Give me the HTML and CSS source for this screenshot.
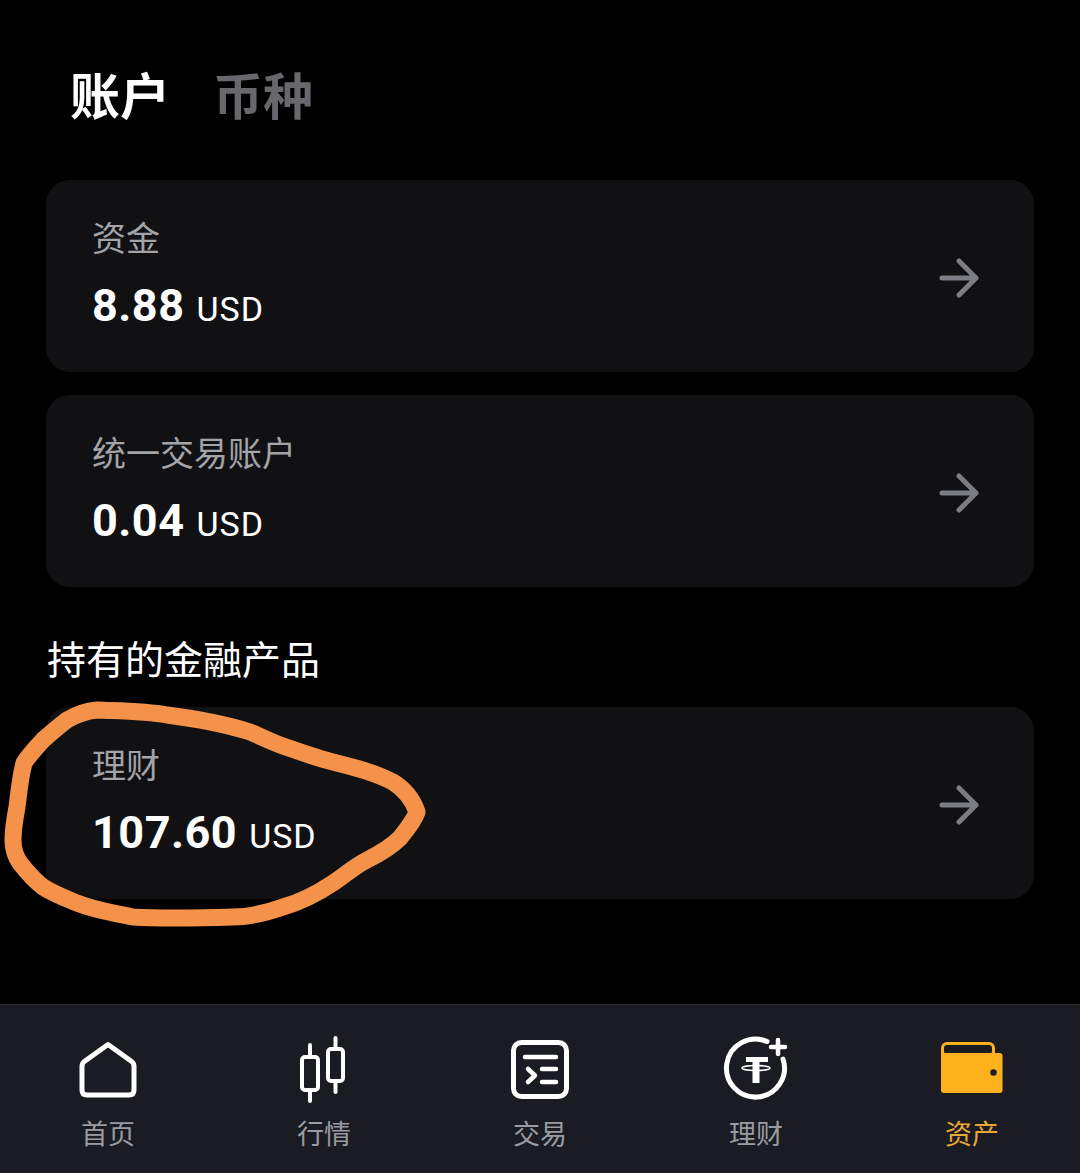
FILE: index.html
```html
<!DOCTYPE html>
<html lang="zh-CN">
<head>
    <meta charset="UTF-8">
    <title>资产</title>
    <link rel="stylesheet" href="styles.css">
</head>
<body>
    <div class="page">
        <main class="content">
            <div class="tabs">
                <span class="tab active">账户</span>
                <span class="tab">币种</span>
            </div>

            <div class="card">
                <div>
                    <div class="card-label">资金</div>
                    <div class="card-value"><b>8.88</b> <span>USD</span></div>
                </div>
                <svg class="arrow" viewBox="0 0 40 40"><path d="M3 20H37M20 3L37 20L20 37"/></svg>
            </div>

            <div class="card">
                <div>
                    <div class="card-label">统一交易账户</div>
                    <div class="card-value"><b>0.04</b> <span>USD</span></div>
                </div>
                <svg class="arrow" viewBox="0 0 40 40"><path d="M3 20H37M20 3L37 20L20 37"/></svg>
            </div>

            <h2 class="section-title">持有的金融产品</h2>

            <div class="card">
                <div>
                    <div class="card-label">理财</div>
                    <div class="card-value"><b>107.60</b> <span>USD</span></div>
                </div>
                <svg class="arrow" viewBox="0 0 40 40"><path d="M3 20H37M20 3L37 20L20 37"/></svg>
            </div>
        </main>

        <nav class="bottom-nav">
            <div class="nav-item">
                <svg class="nav-icon" viewBox="0 0 72 72"><path d="M36 10.500L59 27Q62 29 62 32V56Q62 61 57 61H15Q10 61 10 56V32Q10 29 13 27Z"/></svg>
                <span>首页</span>
            </div>
            <div class="nav-item">
                <svg class="nav-icon thin" viewBox="0 0 72 72">
                    <rect x="14" y="23" width="16" height="33" rx="3"/>
                    <rect x="40" y="15" width="15" height="32" rx="3"/>
                    <path d="M22 11V23M22 56V67M47.500 4V15M47.500 47V58"/>
                </svg>
                <span>行情</span>
            </div>
            <div class="nav-item">
                <svg class="nav-icon" viewBox="0 0 72 72">
                    <rect x="9.500" y="8.500" width="53" height="54" rx="8"/>
                    <path class="thin-line" d="M21 23H52M38 35H52M38 48H52M24 35L31 41.500L24 48"/>
                </svg>
                <span>交易</span>
            </div>
            <div class="nav-item">
                <svg class="nav-icon" viewBox="0 0 72 72">
                    <path d="M47 7.500A29 29 0 1 0 63 25"/>
                    <path class="thin-line" d="M58 6V20M51 13H65"/>
                    <path class="coin" d="M26 23H48V28H39.500V49H32.500V28H26Z"/>
                    <ellipse class="coin-ring" cx="36" cy="34" rx="14" ry="2.500"/>
                </svg>
                <span>理财</span>
            </div>
            <div class="nav-item current">
                <svg class="nav-icon wallet" viewBox="0 0 72 72">
                    <rect class="wallet-fill" x="5" y="8" width="54" height="24" rx="6"/>
                    <rect class="wallet-gap" x="8" y="11" width="48" height="9" rx="3"/>
                    <path class="wallet-fill" d="M5 19H63.500Q66.500 19 66.500 22V56Q66.500 59 63.500 59H8Q5 59 5 56Z"/>
                    <circle class="wallet-dot" cx="57.500" cy="38.500" r="3.200"/>
                </svg>
                <span>资产</span>
            </div>
        </nav>

        <svg class="scribble" viewBox="0 0 1080 1173">
            <path d="M97 710C120 711 145 711 167 715C198 719 225 724 250 732C262 737 272 742 283 746C300 752 316 758 333 762C353 767 374 772 393 782C404 789 413 800 417 812C414 821 407 829 400 838C390 848 379 854 367 860C355 866 345 875 333 883C318 893 301 902 283 907C266 913 250 917 233 917C200 918 166 919 133 917C113 913 95 910 77 903C65 898 54 894 43 887C34 880 27 872 20 863C15 856 13 848 13 840C13 828 15 818 17 807C19 792 20 778 24 763C29 755 36 748 43 740C51 733 59 726 67 720C77 714 87 711 97 710Z"/>
        </svg>
    </div>
</body>
</html>
```

FILE: styles.css
```css
* {
    margin: 0;
    padding: 0;
    box-sizing: border-box;
}

body {
    background-color: #000;
    color: #fff;
    font-family: Roboto, "Noto Sans CJK SC", sans-serif;
}

.page {
    position: relative;
    width: 1080px;
    height: 1173px;
    display: flex;
    flex-direction: column;
    overflow: hidden;
}

.content {
    flex: 1;
    padding: 0 46px;
}

/* Tabs */
.tabs {
    display: flex;
    gap: 43px;
    height: 180px;
    padding: 63px 0 0 24px;
}

.tab {
    font-size: 50px;
    font-weight: 700;
    line-height: 70px;
    color: #67686b;
}

.tab.active {
    color: #fff;
}

/* Cards */
.card {
    display: flex;
    justify-content: space-between;
    align-items: center;
    height: 192px;
    margin-bottom: 23px;
    padding: 4px 55px 0 46px;
    background-color: #111114;
    border-radius: 24px;
}

.card-label {
    font-size: 34px;
    line-height: 50px;
    color: #a3a4a8;
}

.card-value {
    margin-top: 16px;
    line-height: 52px;
}

.card-value b {
    font-size: 45px;
    font-weight: 700;
    letter-spacing: 0.5px;
}

.card-value span {
    margin-left: 8px;
    font-size: 34px;
    letter-spacing: 1px;
}

.arrow {
    width: 40px;
    height: 40px;
    fill: none;
    stroke: #7d7e83;
    stroke-width: 5;
    stroke-linecap: round;
    stroke-linejoin: round;
}

.section-title {
    height: 97px;
    padding: 22px 0 0 1px;
    font-size: 39px;
    font-weight: 400;
    line-height: 58px;
}

/* Bottom nav */
.bottom-nav {
    display: grid;
    grid-template-columns: repeat(5, 1fr);
    height: 169px;
    padding-top: 29px;
    background-color: #1b1c23;
    border-top: 1px solid #2b2c33;
}

.nav-item {
    display: flex;
    flex-direction: column;
    align-items: center;
    font-size: 27px;
    line-height: 40px;
    color: #9a9ba0;
}

.nav-icon {
    width: 72px;
    height: 72px;
    margin-bottom: 9px;
    fill: none;
    stroke: #fff;
    stroke-width: 5;
    stroke-linecap: round;
    stroke-linejoin: round;
}

.nav-icon.thin {
    stroke-width: 4;
}

.thin-line {
    stroke-width: 4.500;
}

.coin {
    fill: #fff;
    stroke: none;
}

.coin-ring {
    stroke-width: 1.500;
}

.nav-item.current {
    color: #e8a736;
}

.wallet {
    stroke: none;
}

.wallet-fill {
    fill: #fdb21d;
}

.wallet-gap {
    fill: #1b1c23;
}

.wallet-dot {
    fill: #1b1c23;
}

/* Orange pen mark drawn over the screenshot */
.scribble {
    position: absolute;
    top: 0;
    left: 0;
    width: 1080px;
    height: 1173px;
    fill: none;
    stroke: #f4924a;
    stroke-width: 17;
    stroke-linejoin: round;
    pointer-events: none;
}
```
